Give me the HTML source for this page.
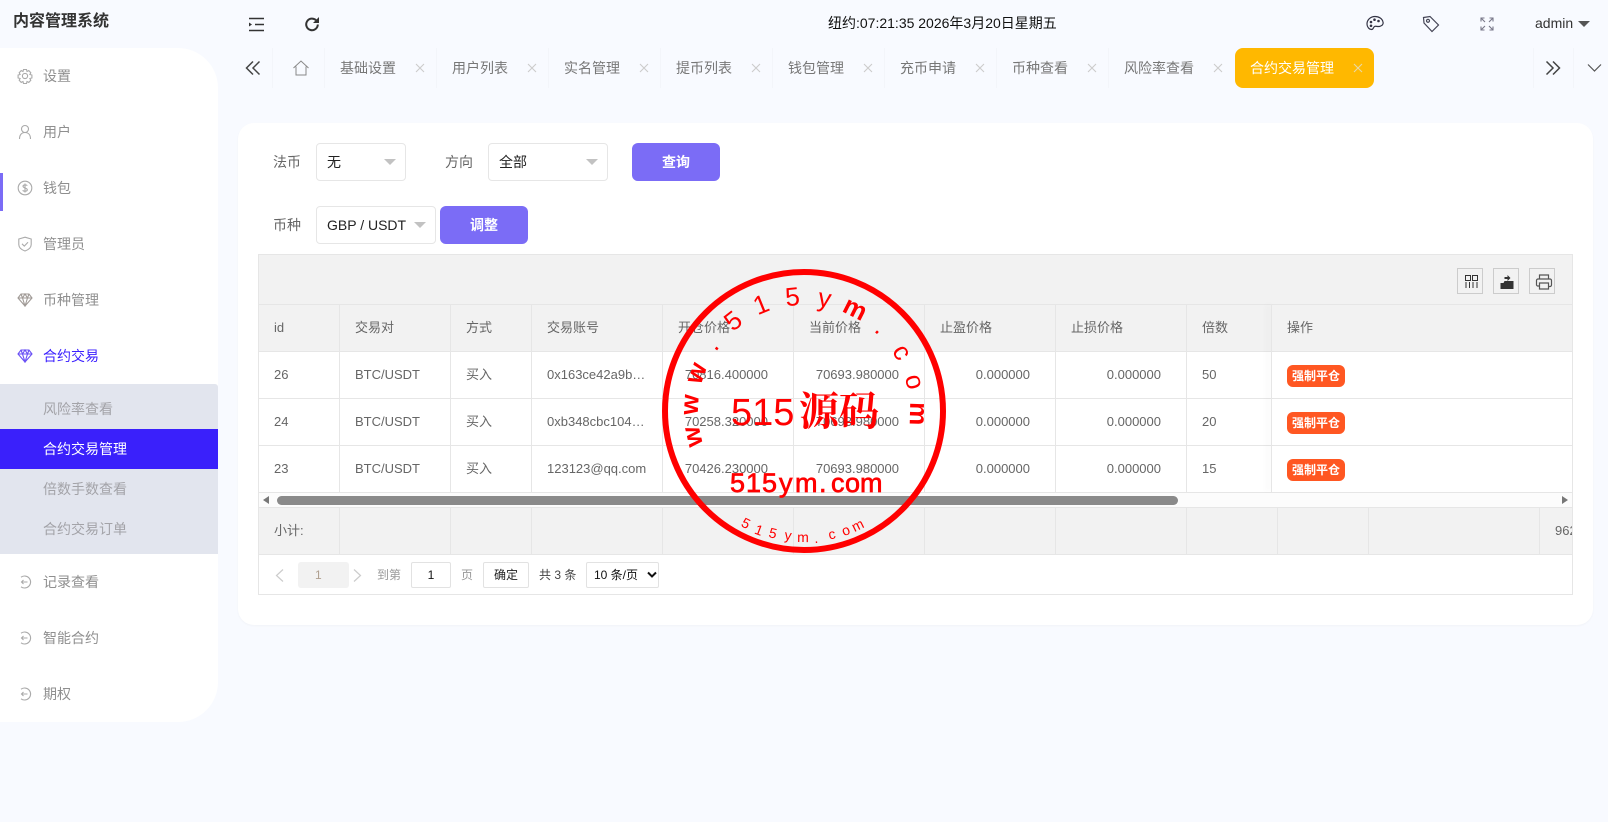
<!DOCTYPE html>
<html lang="zh"><head><meta charset="utf-8"><title>内容管理系统</title>
<style>
html,body{margin:0;padding:0;width:1608px;height:822px;overflow:hidden;background:#f8faff;font-family:"Liberation Sans","WenQuanYi Zen Hei","Noto Sans CJK SC",sans-serif;font-size:14px;color:#666}
.a{position:absolute}
.t{position:absolute;white-space:nowrap;line-height:20px}
.c{font-size:13px}
.side{left:0;top:48px;width:218px;height:674px;background:#fff;border-radius:0 40px 40px 0}
.m{color:#8f8f8f;left:43px}
.ic{position:absolute;fill:none;stroke:#aaa;stroke-width:1.1}
.sep{position:absolute;top:48px;height:40px;width:1px;background:#f3f5fa}
.x{position:absolute;top:62px;width:12px;height:12px;fill:none;stroke:#ccc;stroke-width:1.1}
.tab{position:absolute;top:58px;line-height:20px;color:#777;white-space:nowrap}
.sel{position:absolute;background:#fff;border:1px solid #e6e6e6;border-radius:4px;box-sizing:border-box;color:#222;line-height:36px;padding-left:10px;white-space:nowrap}
.sel i{position:absolute;right:9px;top:15px;width:0;height:0;border:6px solid transparent;border-top:6px solid #c2c2c2;border-bottom:0}
.btn{position:absolute;background:#7b6cf6;color:#fff;font-weight:bold;text-align:center;border-radius:6px;line-height:38px}
.h{position:absolute;background:#e6e6e6;height:1px;left:258px;width:1315px}
.v{position:absolute;background:#e6e6e6;width:1px}
.n{position:absolute;white-space:nowrap;line-height:20px;text-align:right;width:100px;font-size:13px}
.tb{position:absolute;top:268px;width:26px;height:26px;box-sizing:border-box;border:1px solid #ccc}
.force{position:absolute;left:1287px;width:58px;height:22px;background:#ff5722;border-radius:6px;color:#fff;font-size:12px;font-weight:bold;line-height:22px;text-align:center}
.pg{position:absolute;box-sizing:border-box;top:562px;height:26px;background:#fff;border:1px solid #e2e2e2;border-radius:2px;text-align:center;font-size:12px;line-height:24px;color:#222}
.p{position:absolute;top:565px;line-height:20px;font-size:12px;white-space:nowrap}
</style></head><body>

<div class="t" style="left:13px;top:12px;font-size:16px;font-weight:bold;color:#333">内容管理系统</div>

<svg class="a" style="left:248px;top:16px" width="17" height="17" viewBox="0 0 17 17" fill="none" stroke="#333" stroke-width="1.6"><path d="M1 2.500h15M7 8.500h9M1 14.500h15"/><path d="M1 6.500l3 2-3 2z" fill="#333" stroke="none"/></svg>
<svg class="a" style="left:304px;top:16px" width="16" height="16" viewBox="0 0 16 16" fill="none" stroke="#333" stroke-width="2"><path d="M13.800 8.500a5.800 5.800 0 1 1-1.800-4.300"/><path d="M15 1v6H9z" fill="#333" stroke="none"/></svg>

<div class="t" style="left:828px;top:13px;color:#111">纽约:07:21:35 2026年3月20日星期五</div>

<svg class="a" style="left:1366px;top:15px" width="18" height="17" viewBox="0 0 18 17" fill="none" stroke="#334" stroke-width="1.2"><path d="M9 1.500C4.500 1.500 1 4.800 1 9c0 2.800 2 5.500 4.500 5.500 2 0 1.500-2 3-3 1.300-.8 3 .6 5.500-.2 2.500-.8 3.500-2.300 3-4.300C16.300 3.800 13 1.500 9 1.500z"/><g fill="#334" stroke="none"><circle cx="5" cy="7" r="1.300"/><circle cx="8.500" cy="4.700" r="1.300"/><circle cx="12.500" cy="6" r="1.300"/><circle cx="5" cy="10.800" r="1.300"/></g></svg>
<svg class="a" style="left:1422px;top:15px" width="18" height="18" viewBox="0 0 18 18" fill="none" stroke="#445" stroke-width="1.2"><path d="M1.500 2.500 8 1.500l8.500 8.500-6.500 6.500L2 8z"/><circle cx="6" cy="5.800" r="1.500"/></svg>
<svg class="a" style="left:1480px;top:17px" width="14" height="14" viewBox="0 0 14 14" fill="none" stroke="#778" stroke-width="1.100"><path d="M1 4.500V1h3.500M1 1l4 4M13 4.500V1H9.500M13 1 9 5M1 9.500V13h3.500M1 13l4-4M13 9.500V13H9.500M13 13 9 9"/></svg>
<div class="t" style="left:1535px;top:13px;color:#333">admin</div>
<div class="a" style="left:1578px;top:21px;width:0;height:0;border:6px solid transparent;border-top:6px solid #555;border-bottom:0"></div>

<div class="a side"></div>
<div class="a" style="left:0;top:173px;width:3px;height:38px;background:#7b6cf6"></div>

<svg class="ic" style="left:17px;top:68px" width="16" height="16" viewBox="0 0 16 16"><path d="M6.500 1.500h3l.5 2 1.800-.9 2 2.100-.9 1.800 2 .5v3l-2 .5.900 1.800-2 2.100-1.800-.9-.5 2h-3l-.5-2-1.800.9-2-2.100.9-1.800-2-.5v-3l2-.5-.9-1.800 2-2.100 1.800.9z"/><circle cx="8" cy="8" r="2.600"/></svg>
<div class="t m" style="top:66px">设置</div>
<svg class="ic" style="left:17px;top:124px" width="16" height="16" viewBox="0 0 16 16"><circle cx="8" cy="5" r="3.500"/><path d="M2.500 15c0-4 2-6.500 5.500-6.500s5.500 2.500 5.500 6.500"/></svg>
<div class="t m" style="top:122px">用户</div>
<svg class="ic" style="left:17px;top:180px" width="16" height="16" viewBox="0 0 16 16"><circle cx="8" cy="8" r="6.800"/><path d="M10.300 5.600C9.800 4.800 6 4.400 6 6.300S10.300 7.800 10.300 9.800 6.300 11.400 5.700 10.300M8 3.500v9"/></svg>
<div class="t m" style="top:178px">钱包</div>
<svg class="ic" style="left:17px;top:236px" width="16" height="16" viewBox="0 0 16 16"><path d="M8 1.200 14.200 3v5.500c0 3.200-3 5.400-6.200 6.500C4.800 13.900 1.800 11.700 1.800 8.500V3z"/><path d="M5 7.800l2.300 2.300L11 6.300"/></svg>
<div class="t m" style="top:234px">管理员</div>
<svg class="ic" style="left:17px;top:293px;stroke:#a09a96" width="16" height="14" viewBox="0 0 16 14"><path d="M4 1h8l3 4-7 8-7-8zM1 5h14M5.500 5 8 13l2.500-8M4 1l1.500 4L8 1l2.500 4L12 1"/></svg>
<div class="t m" style="top:290px">币种管理</div>
<svg class="ic" style="left:17px;top:349px;stroke:#6a50f5" width="16" height="14" viewBox="0 0 16 14"><path d="M4 1h8l3 4-7 8-7-8zM1 5h14M5.500 5 8 13l2.500-8M4 1l1.500 4L8 1l2.500 4L12 1"/></svg>
<div class="t" style="left:43px;top:346px;color:#3c21ff">合约交易</div>

<div class="a" style="left:0;top:384px;width:218px;height:170px;background:#e2e5ee;border-radius:0 3px 0 0"></div>
<div class="t" style="left:43px;top:399px;color:#a3a3a8">风险率查看</div>
<div class="a" style="left:0;top:429px;width:218px;height:40px;background:#3a20fb"></div>
<div class="t" style="left:43px;top:439px;color:#fff">合约交易管理</div>
<div class="t" style="left:43px;top:479px;color:#a3a3a8">倍数手数查看</div>
<div class="t" style="left:43px;top:519px;color:#a3a3a8">合约交易订单</div>

<svg class="ic" style="left:18px;top:575px" width="14" height="14" viewBox="0 0 14 14"><path d="M3 2.200A6 6 0 1 1 3 11.800"/><path d="M3.500 7h6M5.500 5 3.500 7l2 2"/></svg>
<div class="t m" style="top:572px">记录查看</div>
<svg class="ic" style="left:18px;top:631px" width="14" height="14" viewBox="0 0 14 14"><path d="M3 2.200A6 6 0 1 1 3 11.800"/><path d="M3.500 7h6M5.500 5 3.500 7l2 2"/></svg>
<div class="t m" style="top:628px">智能合约</div>
<svg class="ic" style="left:18px;top:687px" width="14" height="14" viewBox="0 0 14 14"><path d="M3 2.200A6 6 0 1 1 3 11.800"/><path d="M3.500 7h6M5.500 5 3.500 7l2 2"/></svg>
<div class="t m" style="top:684px">期权</div>

<svg class="a" style="left:245px;top:60px" width="16" height="16" viewBox="0 0 16 16" fill="none" stroke="#444" stroke-width="1.500"><path d="M8 1.500 1.500 8 8 14.500M14.500 1.500 8 8l6.500 6.500"/></svg>
<div class="sep" style="left:272px"></div>
<svg class="a" style="left:293px;top:60px" width="16" height="16" viewBox="0 0 16 16" fill="none" stroke="#888" stroke-width="1"><path d="M.500 8 8 1l7.500 7M3 6.500v8.500h10V6.500"/></svg>
<div class="sep" style="left:324px"></div>
<div class="tab" style="left:340px">基础设置</div><svg class="x" style="left:414px" viewBox="0 0 12 12"><path d="M2 2l8 8M10 2l-8 8"/></svg>
<div class="sep" style="left:436px"></div>
<div class="tab" style="left:452px">用户列表</div><svg class="x" style="left:526px" viewBox="0 0 12 12"><path d="M2 2l8 8M10 2l-8 8"/></svg>
<div class="sep" style="left:548px"></div>
<div class="tab" style="left:564px">实名管理</div><svg class="x" style="left:638px" viewBox="0 0 12 12"><path d="M2 2l8 8M10 2l-8 8"/></svg>
<div class="sep" style="left:660px"></div>
<div class="tab" style="left:676px">提币列表</div><svg class="x" style="left:750px" viewBox="0 0 12 12"><path d="M2 2l8 8M10 2l-8 8"/></svg>
<div class="sep" style="left:772px"></div>
<div class="tab" style="left:788px">钱包管理</div><svg class="x" style="left:862px" viewBox="0 0 12 12"><path d="M2 2l8 8M10 2l-8 8"/></svg>
<div class="sep" style="left:884px"></div>
<div class="tab" style="left:900px">充币申请</div><svg class="x" style="left:974px" viewBox="0 0 12 12"><path d="M2 2l8 8M10 2l-8 8"/></svg>
<div class="sep" style="left:996px"></div>
<div class="tab" style="left:1012px">币种查看</div><svg class="x" style="left:1086px" viewBox="0 0 12 12"><path d="M2 2l8 8M10 2l-8 8"/></svg>
<div class="sep" style="left:1108px"></div>
<div class="tab" style="left:1124px">风险率查看</div><svg class="x" style="left:1212px" viewBox="0 0 12 12"><path d="M2 2l8 8M10 2l-8 8"/></svg>
<div class="a" style="left:1235px;top:48px;width:139px;height:40px;background:#ffb800;border-radius:8px"></div>
<div class="tab" style="left:1250px;color:#fff">合约交易管理</div><svg class="x" style="left:1352px;stroke:#e8d8a8" viewBox="0 0 12 12"><path d="M2 2l8 8M10 2l-8 8"/></svg>
<div class="sep" style="left:1533px"></div>
<svg class="a" style="left:1545px;top:60px" width="16" height="16" viewBox="0 0 16 16" fill="none" stroke="#444" stroke-width="1.500"><path d="M1.500 1.500 8 8l-6.500 6.500M8 1.500 14.500 8 8 14.500"/></svg>
<div class="sep" style="left:1573px"></div>
<svg class="a" style="left:1587px;top:62px" width="15" height="12" viewBox="0 0 15 12" fill="none" stroke="#555" stroke-width="1.200"><path d="M1 2.500l6.500 6.500L14 2.500"/></svg>

<div class="a" style="left:238px;top:123px;width:1355px;height:502px;background:#fff;border-radius:16px;box-shadow:0 1px 2px rgba(0,0,0,.03)"></div>

<div class="t" style="left:273px;top:152px">法币</div>
<div class="sel" style="left:316px;top:143px;width:90px;height:38px">无<i></i></div>
<div class="t" style="left:445px;top:152px">方向</div>
<div class="sel" style="left:488px;top:143px;width:120px;height:38px">全部<i></i></div>
<div class="btn" style="left:632px;top:143px;width:88px;height:38px">查询</div>
<div class="t" style="left:273px;top:215px">币种</div>
<div class="sel" style="left:316px;top:206px;width:120px;height:38px">GBP / USDT<i></i></div>
<div class="btn" style="left:440px;top:206px;width:88px;height:38px">调整</div>

<div class="a" style="left:258px;top:254px;width:1315px;height:341px;background:#fff;box-sizing:border-box;border:1px solid #e6e6e6"></div>
<div class="a" style="left:259px;top:255px;width:1313px;height:96px;background:#f2f2f2"></div>
<div class="a" style="left:259px;top:507px;width:1313px;height:47px;background:#f2f2f2"></div>
<div class="h" style="top:304px"></div>
<div class="h" style="top:351px"></div>
<div class="h" style="top:398px"></div>
<div class="h" style="top:445px"></div>
<div class="h" style="top:492px"></div>
<div class="h" style="top:507px"></div>
<div class="h" style="top:554px"></div>

<div class="v" style="left:339px;top:304px;height:188px"></div>
<div class="v" style="left:450px;top:304px;height:188px"></div>
<div class="v" style="left:531px;top:304px;height:188px"></div>
<div class="v" style="left:662px;top:304px;height:188px"></div>
<div class="v" style="left:793px;top:304px;height:188px"></div>
<div class="v" style="left:924px;top:304px;height:188px"></div>
<div class="v" style="left:1055px;top:304px;height:188px"></div>
<div class="v" style="left:1186px;top:304px;height:188px"></div>
<div class="v" style="left:339px;top:507px;height:47px"></div>
<div class="v" style="left:450px;top:507px;height:47px"></div>
<div class="v" style="left:531px;top:507px;height:47px"></div>
<div class="v" style="left:662px;top:507px;height:47px"></div>
<div class="v" style="left:793px;top:507px;height:47px"></div>
<div class="v" style="left:924px;top:507px;height:47px"></div>
<div class="v" style="left:1055px;top:507px;height:47px"></div>
<div class="v" style="left:1186px;top:507px;height:47px"></div>
<div class="v" style="left:1277px;top:507px;height:47px"></div>
<div class="v" style="left:1368px;top:507px;height:47px"></div>
<div class="v" style="left:1539px;top:507px;height:47px"></div>

<div class="a" style="left:1271px;top:304px;width:1px;height:188px;background:#e6e6e6;box-shadow:-3px 0 7px rgba(0,0,0,.12)"></div>
<div class="a" style="left:1272px;top:305px;width:300px;height:46px;background:#f2f2f2"></div>
<div class="a" style="left:1272px;top:352px;width:300px;height:46px;background:#fff"></div>
<div class="a" style="left:1272px;top:399px;width:300px;height:46px;background:#fff"></div>
<div class="a" style="left:1272px;top:446px;width:300px;height:46px;background:#fff"></div>

<div class="t c" style="left:274px;top:318px">id</div>
<div class="t c" style="left:355px;top:318px">交易对</div>
<div class="t c" style="left:466px;top:318px">方式</div>
<div class="t c" style="left:547px;top:318px">交易账号</div>
<div class="t c" style="left:678px;top:318px">开仓价格</div>
<div class="t c" style="left:809px;top:318px">当前价格</div>
<div class="t c" style="left:940px;top:318px">止盈价格</div>
<div class="t c" style="left:1071px;top:318px">止损价格</div>
<div class="t c" style="left:1202px;top:318px">倍数</div>
<div class="t c" style="left:1287px;top:318px">操作</div>

<div class="t c" style="left:274px;top:365px">26</div>
<div class="t c" style="left:355px;top:365px">BTC/USDT</div>
<div class="t c" style="left:466px;top:365px">买入</div>
<div class="t c" style="left:547px;top:365px">0x163ce42a9b…</div>
<div class="n" style="left:668px;top:365px">70816.400000</div>
<div class="n" style="left:799px;top:365px">70693.980000</div>
<div class="n" style="left:930px;top:365px">0.000000</div>
<div class="n" style="left:1061px;top:365px">0.000000</div>
<div class="t c" style="left:1202px;top:365px">50</div>

<div class="t c" style="left:274px;top:412px">24</div>
<div class="t c" style="left:355px;top:412px">BTC/USDT</div>
<div class="t c" style="left:466px;top:412px">买入</div>
<div class="t c" style="left:547px;top:412px">0xb348cbc104…</div>
<div class="n" style="left:668px;top:412px">70258.320000</div>
<div class="n" style="left:799px;top:412px">70693.980000</div>
<div class="n" style="left:930px;top:412px">0.000000</div>
<div class="n" style="left:1061px;top:412px">0.000000</div>
<div class="t c" style="left:1202px;top:412px">20</div>

<div class="t c" style="left:274px;top:459px">23</div>
<div class="t c" style="left:355px;top:459px">BTC/USDT</div>
<div class="t c" style="left:466px;top:459px">买入</div>
<div class="t c" style="left:547px;top:459px">123123@qq.com</div>
<div class="n" style="left:668px;top:459px">70426.230000</div>
<div class="n" style="left:799px;top:459px">70693.980000</div>
<div class="n" style="left:930px;top:459px">0.000000</div>
<div class="n" style="left:1061px;top:459px">0.000000</div>
<div class="t c" style="left:1202px;top:459px">15</div>

<div class="force" style="top:365px">强制平仓</div>
<div class="force" style="top:412px">强制平仓</div>
<div class="force" style="top:459px">强制平仓</div>

<div class="a" style="left:259px;top:493px;width:1313px;height:14px;background:#fcfcfc"></div>
<div class="a" style="left:277px;top:496px;width:901px;height:9px;background:#8a8a8a;border-radius:5px"></div>
<div class="a" style="left:263px;top:496px;width:0;height:0;border:4.500px solid transparent;border-right:6px solid #777;border-left:0"></div>
<div class="a" style="left:1562px;top:496px;width:0;height:0;border:4.500px solid transparent;border-left:6px solid #777;border-right:0"></div>

<div class="t c" style="left:274px;top:521px">小计:</div>
<div class="a c" style="left:1555px;top:521px;width:17px;height:20px;overflow:hidden;line-height:20px;white-space:nowrap">962.0</div>

<div class="tb" style="left:1457px"><svg width="24" height="24" viewBox="0 0 24 24" fill="none" stroke="#333" stroke-width="1"><path d="M7.500 6.500h5v5h-5zM14.500 6.500h5v5h-5zM8 13v6M11.500 13v6M15 13v6M19 13v6"/></svg></div>
<div class="tb" style="left:1493px"><svg width="24" height="24" viewBox="0 0 24 24"><g transform="translate(1.500 1)" fill="#333"><path d="M5 13h3l1-2h9v8H5z"/><path d="M9 9V7h3V5l3 3-3 3V9z"/></g></svg></div>
<div class="tb" style="left:1529px"><svg width="24" height="24" viewBox="0 0 24 24" fill="none" stroke="#555" stroke-width="1.200"><g transform="translate(2 1)"><path d="M7.500 9V5h9v4M7 16H5.500A1.500 1.500 0 0 1 4.500 15v-4.500A1.500 1.500 0 0 1 6 9h12a1.500 1.500 0 0 1 1.500 1.500V15a1.500 1.500 0 0 1-1.500 1.500h-1"/><path d="M7.500 13h9v6h-9z"/></g></svg></div>

<svg class="a" style="left:275px;top:569px" width="9" height="13" viewBox="0 0 9 13" fill="none" stroke="#ccc" stroke-width="1.200"><path d="M8 .5 1.500 6.500 8 12.500"/></svg>
<div class="a" style="left:298px;top:562px;width:51px;height:26px;background:#f2f2f2;border-radius:3px"></div>
<div class="p" style="left:315px;color:#b0a090">1</div>
<svg class="a" style="left:353px;top:569px" width="9" height="13" viewBox="0 0 9 13" fill="none" stroke="#ccc" stroke-width="1.200"><path d="M1 .5l6.500 6L1 12.500"/></svg>
<div class="p" style="left:377px;color:#999">到第</div>
<div class="pg" style="left:411px;width:40px;color:#111">1</div>
<div class="p" style="left:461px;color:#999">页</div>
<div class="pg" style="left:483px;width:46px">确定</div>
<div class="p" style="left:539px;color:#444">共 3 条</div>
<div class="pg" style="left:586px;width:73px;text-align:left;padding-left:7px;color:#111">10 条/页<svg class="a" style="left:60px;top:8px" width="10" height="8" viewBox="0 0 10 8" fill="none" stroke="#111" stroke-width="2"><path d="M1 1.500l4 4 4-4"/></svg></div>

<svg class="a" style="left:0;top:0;pointer-events:none" width="1608" height="822" fill="#f00">
<circle cx="804" cy="411" r="139" fill="none" stroke="#f00" stroke-width="6"/>
<g font-family="'Liberation Sans',sans-serif" font-size="26" text-anchor="middle">
<text transform="translate(804 411) rotate(-103) translate(0 -106)" font-weight="bold">w</text>
<text transform="translate(804 411) rotate(-86.800) translate(0 -106)" font-weight="bold">w</text>
<text transform="translate(804 411) rotate(-70.600) translate(0 -106)" font-weight="bold">w</text>
<text transform="translate(804 411) rotate(-54.400) translate(0 -106)">.</text>
<text transform="translate(804 411) rotate(-38.200) translate(0 -106)">5</text>
<text transform="translate(804 411) rotate(-22) translate(0 -106)">1</text>
<text transform="translate(804 411) rotate(-5.800) translate(0 -106)">5</text>
<text transform="translate(804 411) rotate(10.400) translate(0 -106)">y</text>
<text transform="translate(804 411) rotate(26.600) translate(0 -106)" font-weight="bold">m</text>
<text transform="translate(804 411) rotate(42.800) translate(0 -106)">.</text>
<text transform="translate(804 411) rotate(59) translate(0 -106)">c</text>
<text transform="translate(804 411) rotate(75.200) translate(0 -106)">o</text>
<text transform="translate(804 411) rotate(91.400) translate(0 -106)" font-weight="bold">m</text>
</g>
<text x="731" y="425" font-family="'Liberation Sans',sans-serif" font-size="38">515</text>
<text x="799" y="425" font-family="'Noto Serif CJK SC',serif" font-size="40" font-weight="bold">源码</text>
<text x="730 746 762 779 795 819 831 845 860" y="492" font-family="'Liberation Sans',sans-serif" font-size="27" stroke="#f00" stroke-width=".7">515ym.com</text>
<g font-family="'Liberation Sans',sans-serif" font-size="14" text-anchor="middle">
<text transform="translate(746 523) rotate(27) translate(0 5)">5</text>
<text transform="translate(759 530) rotate(20.700) translate(0 5)">1</text>
<text transform="translate(773 533) rotate(14) translate(0 5)">5</text>
<text transform="translate(788 536) rotate(8) translate(0 4)">y</text>
<text transform="translate(803 538) rotate(0.500) translate(0 4)">m</text>
<text transform="translate(816 538) rotate(-6) translate(0 5)">.</text>
<text transform="translate(832 535) rotate(-13) translate(0 4)">c</text>
<text transform="translate(846 531) rotate(-20) translate(0 4)">o</text>
<text transform="translate(858 526) rotate(-26) translate(0 4)">m</text>
</g>
</svg>
</body></html>
